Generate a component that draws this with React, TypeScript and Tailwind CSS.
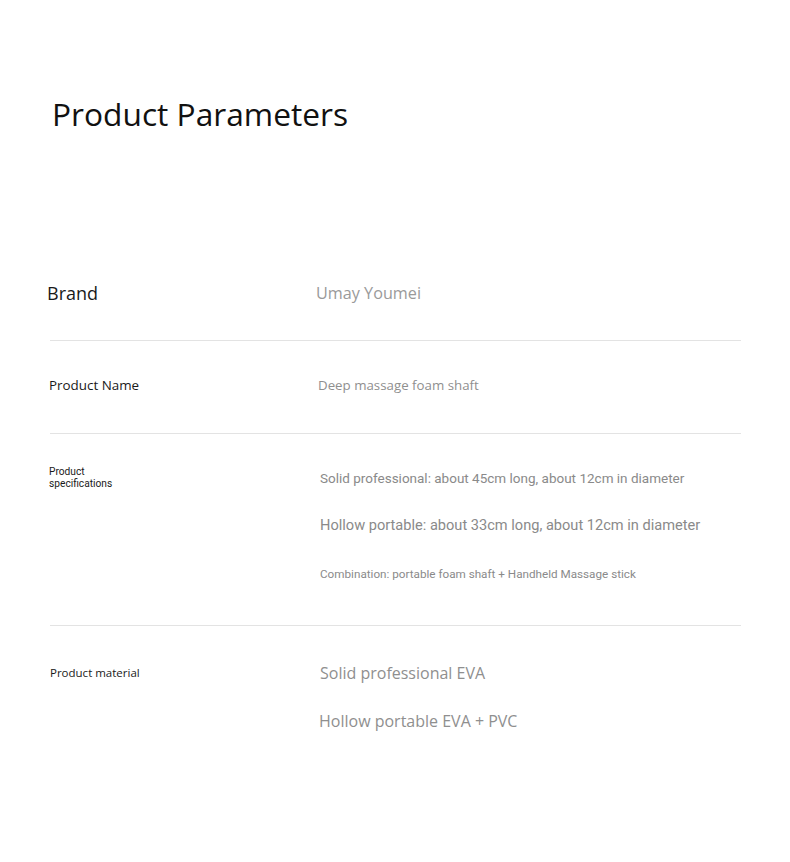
const SPECS = [
  { text: "Solid professional: about 45cm long, about 12cm in diameter", size: "text-[13.5px]", mt: "mt-[35px]" },
  { text: "Hollow portable: about 33cm long, about 12cm in diameter", size: "text-[14.6px]", mt: "mt-[29px]" },
  { text: "Combination: portable foam shaft + Handheld Massage stick", size: "text-[11.7px]", mt: "mt-[31px]" },
];

export default function App() {
  return (
    <div className="min-h-[862px] bg-white font-['Open_Sans',sans-serif] text-[#1a1a1a]">
      <h1 className="pl-[52px] pt-[94px] text-[31.7px] leading-[40px] text-[#111]">
        Product Parameters
      </h1>

      <div className="ml-[50px] mt-[136px] w-[691px]">
        {/* Brand */}
        <div className="grid h-[71px] grid-cols-[266px_1fr] border-b border-[#e3e3e3] pt-[11px]">
          <span className="-ml-[3px] text-[18px] leading-[24px]">Brand</span>
          <span className="text-[16.2px] leading-[24px] text-[#9a9a9a]">Umay Youmei</span>
        </div>

        {/* Product name */}
        <div className="grid h-[93px] grid-cols-[268px_1fr] border-b border-[#e3e3e3] pt-[35px]">
          <span className="-ml-[1px] text-[13.4px] leading-[18px]">Product Name</span>
          <span className="text-[13.3px] leading-[18px] text-[#8f8f8f]">Deep massage foam shaft</span>
        </div>

        {/* Specifications */}
        <div className="grid h-[192px] grid-cols-[270px_1fr] border-b border-[#e3e3e3]">
          <span className="-ml-[1px] mt-[32px] font-['Roboto'] text-[10.2px] leading-[12px]">
            Product
            <br />
            specifications
          </span>
          <div className="flex flex-col font-['Roboto',sans-serif] text-[#8a8a8a]">
            {SPECS.map((s) => (
              <span key={s.text} className={`${s.mt} ${s.size} leading-[18px]`}>
                {s.text}
              </span>
            ))}
          </div>
        </div>

        {/* Material */}
        <div className="grid grid-cols-[270px_1fr] pt-[36px]">
          <span className="mt-[2px] text-[11.5px] leading-[18px]">Product material</span>
          <div className="flex flex-col text-[16px] leading-[22px] text-[#8f8f8f]">
            <span>Solid professional EVA</span>
            <span className="-ml-[1px] mt-[26px]">Hollow portable EVA + PVC</span>
          </div>
        </div>
      </div>
    </div>
  );
}
